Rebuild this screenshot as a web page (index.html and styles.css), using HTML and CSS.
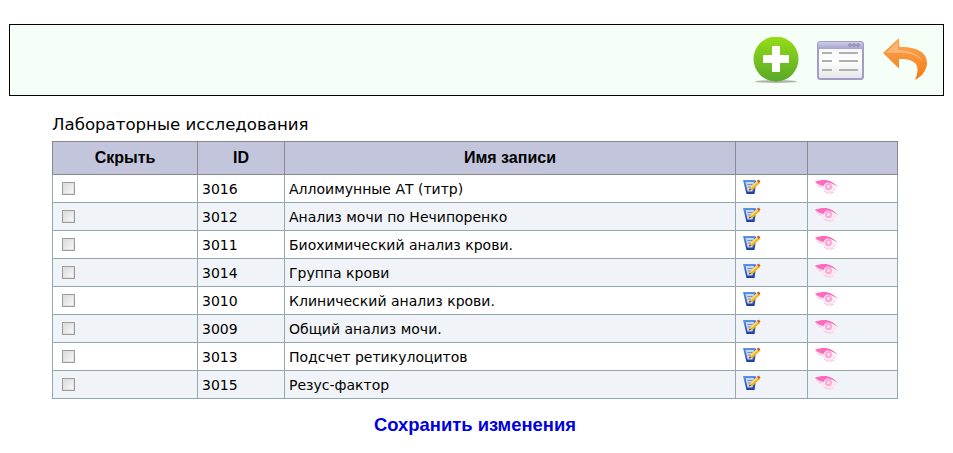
FILE: index.html
```html
<!DOCTYPE html>
<html lang="ru">
<head>
    <meta charset="UTF-8">
    <meta name="viewport" content="width=device-width, initial-scale=1.0">
    <title>Лабораторные исследования</title>
    <link rel="stylesheet" href="styles.css">
</head>
<body>

<svg class="defs" width="0" height="0">
    <defs>
        <linearGradient id="gradEdit" x1="0" y1="0" x2="0" y2="1">
            <stop offset="0" stop-color="#5b93ea"/>
            <stop offset="1" stop-color="#1c3aa0"/>
        </linearGradient>
        <g id="editIcon">
            <path d="M0 1h12.500l1 1.500L11.500 15H3.500z" fill="url(#gradEdit)"/>
            <path d="M2.500 3h8.500l-1.500 9.500H4.500z" fill="#c9d6ec"/>
            <path d="M4.500 5.500h5M5 8h3" stroke="#7f8db0" stroke-width="1"/>
            <path d="M6 11.500l1.500-3.500 7-6.500 2.500 2.500-7 6.500z" fill="#f4b41e"/>
            <path d="M7.500 8l7-6.500 1 1-7 6.500z" fill="#fbe08a"/>
            <path d="M14 2l1.500-1.500L17.500 2.500 16 4z" fill="#c0562c"/>
            <path d="M6 11.500l.7-2 1.500 1.300z" fill="#3a3a3a"/>
        </g>
        <g id="eyeIcon">
            <path d="M3 4C7 3 12 2.500 16 4.500c2 1 4.500 2.500 6 4-2 2.500-4.500 4.500-7.500 4.500-3.500 0-6-2-7.500-4.500z" fill="#fde6f2"/>
            <path d="M0 1.500C4 .5 9-.5 13 .5c4 .8 7.500 3.500 10 7-3-2.500-6-4.500-10-5-2 0-3.500 1-4.500 3.500C5.500 5.500 2.500 4 0 1.500z" fill="#fb6abb"/>
            <path d="M2 3.500l-1.500-.5M4 5l-2 0M6 6.500l-2 .5" stroke="#fca4d6" stroke-width="1"/>
            <circle cx="13.500" cy="6.500" r="3.500" fill="#f8a8d4"/>
            <circle cx="13.500" cy="6.500" r="1.500" fill="#fde4f1"/>
            <path d="M9 11c2 2 6 3 10 1" stroke="#fcc4e2" stroke-width="1" fill="none"/>
        </g>
    </defs>
</svg>

<div class="toolbar">
    <a class="tool" href="#" title="Добавить">
        <svg width="46" height="46" viewBox="0 0 46 46">
            <defs>
                <linearGradient id="gradPlus" x1="0" y1="0" x2="0" y2="1">
                    <stop offset="0" stop-color="#97dc18"/>
                    <stop offset="1" stop-color="#57a82a"/>
                </linearGradient>
            </defs>
            <ellipse cx="23" cy="44.500" rx="21" ry="1.500" fill="#b0b3aa"/>
            <circle cx="23" cy="22" r="22.500" fill="url(#gradPlus)"/>
            <path d="M20 9h6a1 1 0 0 1 1 1v8h8a1 1 0 0 1 1 1v6a1 1 0 0 1-1 1h-8v8a1 1 0 0 1-1 1h-6a1 1 0 0 1-1-1v-8h-8a1 1 0 0 1-1-1v-6a1 1 0 0 1 1-1h8v-8a1 1 0 0 1 1-1z" fill="#fff"/>
        </svg>
    </a>
    <a class="tool" href="#" title="Список">
        <svg width="47" height="39" viewBox="0 0 47 39">
            <defs>
                <linearGradient id="gradBar" x1="0" y1="0" x2="0" y2="1">
                    <stop offset="0" stop-color="#cfcde6"/>
                    <stop offset="1" stop-color="#a5a2cc"/>
                </linearGradient>
                <linearGradient id="gradBody" x1="0" y1="0" x2="0" y2="1">
                    <stop offset="0" stop-color="#f0f0f2"/>
                    <stop offset=".5" stop-color="#ffffff"/>
                    <stop offset="1" stop-color="#e6e6ea"/>
                </linearGradient>
            </defs>
            <rect x="1" y="1" width="45" height="37" rx="2.500" fill="url(#gradBody)" stroke="#a09ec4" stroke-width="2"/>
            <path d="M1 3.500A2.500 2.500 0 0 1 3.500 1h40A2.500 2.500 0 0 1 46 3.500V8H1z" fill="url(#gradBar)"/>
            <g fill="none" stroke="#77759a" stroke-width=".8">
                <circle cx="33" cy="4" r="1.300"/>
                <circle cx="37" cy="4" r="1.300"/>
                <circle cx="41" cy="4" r="1.300"/>
            </g>
            <path d="M5 12h10M22 12h19M5 20h10M22 20h19M5 29h10M22 29h19" stroke="#b0b0b0" stroke-width="2"/>
        </svg>
    </a>
    <a class="tool tool-back" href="#" title="Назад">
        <svg width="45" height="43" viewBox="0 0 45 43">
            <defs>
                <linearGradient id="gradBack" x1="0" y1="0" x2="0" y2="1">
                    <stop offset="0" stop-color="#fba85c"/>
                    <stop offset="1" stop-color="#f37a0e"/>
                </linearGradient>
            </defs>
            <path d="M16 0L0 15l16 15.500V21c6-.5 13 .5 16.500 4.500 3 3.500 2.500 10-.5 16.500 7-3.500 12-10 12-17C44 15 35 8.500 16.500 9z" fill="url(#gradBack)"/>
            <path d="M14.500 4L3 15h11c8-1 20 1 26 9-3-7-12-12-25-12z" fill="#fcc08a" opacity=".7"/>
        </svg>
    </a>
</div>

<form class="content">
    <div class="title">Лабораторные исследования</div>
    <table class="records">
        <thead>
            <tr>
                <th class="col-hide">Скрыть</th>
                <th class="col-id">ID</th>
                <th>Имя записи</th>
                <th class="col-edit"></th>
                <th class="col-view"></th>
            </tr>
        </thead>
        <tbody id="rows"></tbody>
    </table>
    <div class="save"><a href="#">Сохранить изменения</a></div>
</form>

<script>
    const records = [
        [3016, 'Аллоимунные АТ (титр)'],
        [3012, 'Анализ мочи по Нечипоренко'],
        [3011, 'Биохимический анализ крови.'],
        [3014, 'Группа крови'],
        [3010, 'Клинический анализ крови.'],
        [3009, 'Общий анализ мочи.'],
        [3013, 'Подсчет ретикулоцитов'],
        [3015, 'Резус-фактор']
    ];

    document.getElementById('rows').innerHTML = records.map(r => `
        <tr>
            <td><input type="checkbox" class="check"></td>
            <td>${r[0]}</td>
            <td>${r[1]}</td>
            <td><svg class="icon" width="18" height="15" viewBox="0 0 18 15"><use href="#editIcon"/></svg></td>
            <td><svg class="icon" width="24" height="14" viewBox="0 0 24 14"><use href="#eyeIcon"/></svg></td>
        </tr>`).join('');
</script>

</body>
</html>
```

FILE: styles.css
```css
body {
    font-family: "DejaVu Sans", sans-serif;
    margin: 24px 9px 0 9px;
    background-color: #fff;
    color: #000;
}
.defs {
    display: block;
    height: 0;
}
.toolbar {
    display: flex;
    justify-content: flex-end;
    align-items: center;
    gap: 18px;
    height: 70px;
    padding-right: 15px;
    background-color: #f5fff7;
    border: 1px solid #000;
}
.tool {
    display: block;
    line-height: 0;
}
.tool-back {
    margin: -2px 0 0 1px;
}
.content {
    margin: 18px 46px 0 43px;
}
.title {
    font-size: 16.6px;
    line-height: 22px;
    height: 27px;
}
.records {
    border-collapse: collapse;
    width: 846px;
    table-layout: fixed;
    font-size: 14px;
}
.records th, .records td {
    text-align: left;
    padding: 0 4px;
}
.records th {
    height: 32px;
    background-color: #c3c5dc;
    border: 1px solid #87898f;
    font-family: "Liberation Sans", Arial, sans-serif;
    font-size: 16px;
    text-align: center;
}
.records td {
    height: 27px;
    border: 1px solid #93a7b0;
}
.records tbody tr:nth-child(even) td {
    background-color: #f0f4f8;
}
.col-hide { width: 136px; }
.col-id { width: 78px; }
.col-edit { width: 63px; }
.col-view { width: 81px; }
.check {
    appearance: none;
    display: block;
    box-sizing: border-box;
    width: 13px;
    height: 13px;
    margin: 0 0 1px 5px;
    border: 1px solid #9c9c9c;
    box-shadow: inset 0 0 0 1px #e0e0e0;
    background: linear-gradient(135deg, #d8d8dc, #fbfbfb);
}
.icon {
    display: block;
    margin: 0 0 4px 3px;
}
.save {
    margin-top: 15px;
    text-align: center;
    font-family: "Liberation Sans", Arial, sans-serif;
    font-size: 18.4px;
    font-weight: bold;
}
.save a {
    color: #0000e0;
    text-decoration: none;
}
```
